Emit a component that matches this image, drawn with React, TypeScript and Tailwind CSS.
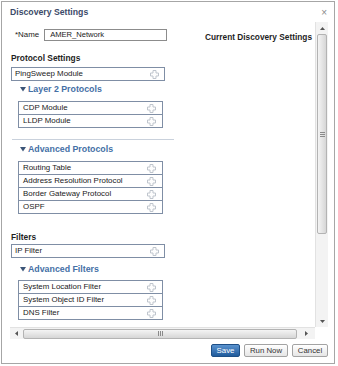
import React from 'react';

const FONT = { fontFamily: '"Liberation Sans", Arial, sans-serif' };

const PlusIcon: React.FC = () => (
  <svg width="9" height="9" viewBox="0 0 9 9" className="shrink-0">
    <path
      d="M3 0.5h3v2.5h2.5v3h-2.5v2.5h-3v-2.5h-2.5v-3h2.5z"
      fill="#fdfdfd"
      stroke="#bfc5cd"
      strokeWidth="1"
      strokeLinejoin="round"
    />
  </svg>
);

const Triangle: React.FC = () => (
  <svg width="6" height="5" viewBox="0 0 6 5" className="shrink-0">
    <path d="M0 0h6L3 4.5z" fill="#3c5578" />
  </svg>
);

const ModuleBox: React.FC<{ label: string; wide?: boolean; stacked?: boolean }> = ({ label, wide, stacked }) => (
  <div
    className={`flex items-center justify-between h-[14px] border border-[#7f8ea5] bg-white text-[7.9px] leading-[12px] text-[#1a1a1a] ${
      wide ? 'ml-px w-[154px] pl-[3px] pr-[5px]' : 'ml-[8px] w-[145px] pl-[4px] pr-[6px]'
    } ${stacked ? '-mt-px' : ''}`}
  >
    <span>{label}</span>
    <PlusIcon />
  </div>
);

const GroupHeader: React.FC<{ title: string; className?: string }> = ({ title, className }) => (
  <div className={`flex items-center h-[10px] pl-[10px] ${className ?? ''}`}>
    <Triangle />
    <span className="ml-[2px] text-[8.8px] font-bold leading-[10px] text-[#4470a6]">{title}</span>
  </div>
);

const ModuleList: React.FC<{ items: string[]; className?: string }> = ({ items, className }) => (
  <div className={className}>
    {items.map((item, i) => (
      <ModuleBox key={item} label={item} stacked={i > 0} />
    ))}
  </div>
);

const VerticalScrollbar: React.FC = () => (
  <div className="flex flex-col w-[13px] h-[305px] bg-[#f3f3f3] border-l border-[#e2e2e2]">
    <div className="flex items-center justify-center h-[12px]">
      <svg width="5" height="3" viewBox="0 0 5 3">
        <path d="M0 3L2.5 0L5 3z" fill="#555" />
      </svg>
    </div>
    <div className="flex items-center justify-center mx-px h-[200px] rounded-[2px] border border-[#b3b3b3] bg-gradient-to-r from-[#f4f4f4] to-[#d6d6d6]">
      <div className="flex flex-col gap-px">
        <div className="w-[5px] h-px bg-[#8a8a8a]" />
        <div className="w-[5px] h-px bg-[#8a8a8a]" />
        <div className="w-[5px] h-px bg-[#8a8a8a]" />
      </div>
    </div>
    <div className="flex-1" />
    <div className="flex items-center justify-center h-[12px]">
      <svg width="5" height="3" viewBox="0 0 5 3">
        <path d="M0 0L2.5 3L5 0z" fill="#555" />
      </svg>
    </div>
  </div>
);

const HorizontalScrollbar: React.FC = () => (
  <div className="flex items-center h-[12px] w-[305px] bg-[#f3f3f3] border-t border-[#e2e2e2]">
    <div className="flex items-center justify-center w-[13px]">
      <svg width="3" height="5" viewBox="0 0 3 5">
        <path d="M3 0L0 2.5L3 5z" fill="#555" />
      </svg>
    </div>
    <div className="flex items-center justify-center w-[274px] h-[10px] rounded-[2px] border border-[#b3b3b3] bg-gradient-to-b from-[#f4f4f4] to-[#d6d6d6]">
      <div className="flex gap-px">
        <div className="w-px h-[5px] bg-[#8a8a8a]" />
        <div className="w-px h-[5px] bg-[#8a8a8a]" />
        <div className="w-px h-[5px] bg-[#8a8a8a]" />
      </div>
    </div>
    <div className="flex items-center justify-center flex-1">
      <svg width="3" height="5" viewBox="0 0 3 5">
        <path d="M0 0L3 2.5L0 5z" fill="#555" />
      </svg>
    </div>
  </div>
);

export default function App() {
  return (
    <div className="w-[338px] h-[366px] bg-white overflow-hidden" style={FONT}>
      <div className="ml-px mt-px w-[334px] h-[363px] border border-[#a6a6a6] bg-white flex flex-col">
        {/* Title */}
        <div className="flex items-center justify-between h-[20px] pl-[8px] pr-[7px] pt-[2px]">
          <span className="text-[8.7px] font-bold text-[#3b4a68]">Discovery Settings</span>
          <span className="text-[10px] leading-[10px] text-[#8a8a8a]">×</span>
        </div>

        {/* Body */}
        <div className="flex h-[317px]">
          <div className="ml-[8px] flex flex-col">
            <div className="w-[305px] h-[305px] overflow-hidden">
              <div className="flex items-start h-[12px] mt-[7px]">
                <span className="ml-[5px] text-[7.9px] leading-[12px] text-[#1a1a1a]">*Name</span>
                <div className="ml-[5px] w-[123px] h-[12px] border border-[#8c8c8c] pl-[5px] text-[7.6px] leading-[10px] text-[#1a1a1a]">
                  AMER_Network
                </div>
                <span className="ml-auto mr-[3px] mt-[2px] text-[8.3px] font-bold leading-[12px] text-[#1f1f1f]">
                  Current Discovery Settings
                </span>
              </div>

              <div className="mt-[12px] ml-px h-[10px] text-[8.4px] font-bold leading-[10px] text-[#1f1f1f]">Protocol Settings</div>
              <div className="mt-[4px]">
                <ModuleBox label="PingSweep Module" wide />
              </div>

              <GroupHeader title="Layer 2 Protocols" className="mt-[3px]" />
              <ModuleList items={['CDP Module', 'LLDP Module']} className="mt-[7px]" />

              <div className="mt-[11px] ml-[2px] w-[162px] h-px bg-[#c9d1dc]" />

              <GroupHeader title="Advanced Protocols" className="mt-[4px]" />
              <ModuleList
                items={['Routing Table', 'Address Resolution Protocol', 'Border Gateway Protocol', 'OSPF']}
                className="mt-[7px]"
              />

              <div className="mt-[18px] ml-px h-[10px] text-[8.4px] font-bold leading-[10px] text-[#1f1f1f]">Filters</div>
              <div className="mt-[2px]">
                <ModuleBox label="IP Filter" wide />
              </div>

              <GroupHeader title="Advanced Filters" className="mt-[6px]" />
              <ModuleList
                items={['System Location Filter', 'System Object ID Filter', 'DNS Filter']}
                className="mt-[6px]"
              />
            </div>
            <HorizontalScrollbar />
          </div>
          <VerticalScrollbar />
        </div>

        {/* Footer */}
        <div className="flex justify-end gap-[4px] pr-[6px] mt-[5px]">
          <button className="h-[13px] w-[29px] rounded-[2px] border border-[#1e4f86] bg-gradient-to-b from-[#5a93cf] to-[#1f5b9c] text-[7.8px] leading-[11px] text-white">
            Save
          </button>
          <button className="h-[13px] w-[44px] rounded-[2px] border border-[#a3a3a3] bg-gradient-to-b from-white to-[#e6e6e6] text-[7.8px] leading-[11px] text-[#333]">
            Run Now
          </button>
          <button className="h-[13px] w-[36px] rounded-[2px] border border-[#a3a3a3] bg-gradient-to-b from-white to-[#e6e6e6] text-[7.8px] leading-[11px] text-[#333]">
            Cancel
          </button>
        </div>
      </div>
    </div>
  );
}
